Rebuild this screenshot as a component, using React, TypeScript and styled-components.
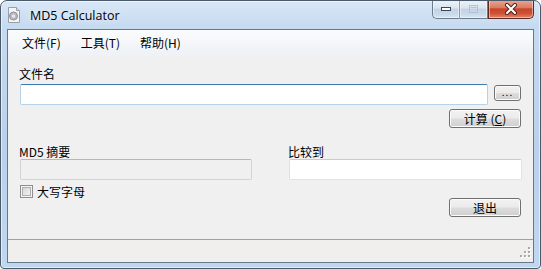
import React from "react";
import styled, { createGlobalStyle } from "styled-components";

const Global = createGlobalStyle`
  html, body { margin: 0; padding: 0; background: #ffffff; }
  body { width: 541px; height: 269px; overflow: hidden; font-family: "Noto Sans CJK SC", "Noto Sans", sans-serif; font-weight: 400; }
  * { box-sizing: border-box; }
`;

const Window = styled.div`
  width: 541px;
  height: 269px;
  border: 1px solid #4b5a6b;
  border-radius: 7px 7px 4px 4px;
  background: linear-gradient(180deg, #d9e7f6 0px, #c6daf0 26px, #b9d1eb 55%, #c0d7ef 100%);
  box-shadow: inset 0 0 0 1px rgba(255, 255, 255, 0.55);
  display: flex;
  flex-direction: column;
  overflow: hidden;
`;

const TitleBar = styled.div`
  height: 28px;
  flex: none;
  display: flex;
  align-items: flex-start;
  padding: 0 6px 0 5px;
`;

const AppIcon = styled.svg`
  width: 16px;
  height: 16px;
  margin-top: 6px;
  flex: none;
`;

const TitleText = styled.span`
  margin: 6px 0 0 8px;
  font-family: "Open Sans", "Noto Sans", sans-serif;
  font-size: 12.5px;
  line-height: 17px;
  color: #000;
  text-shadow: 0 0 6px rgba(255, 255, 255, 0.9);
`;

const Captions = styled.div`
  margin-left: auto;
  display: flex;
  height: 19px;
  margin-top: -1px;
`;

const CaptionBtn = styled.div<{ $kind: "min" | "max" | "close" }>`
  height: 19px;
  width: ${(p) => (p.$kind === "close" ? 46 : 28)}px;
  display: flex;
  align-items: center;
  justify-content: center;
  border: 1px solid ${(p) => (p.$kind === "close" ? "#5b2a22" : "#6c7c8e")};
  border-top: none;
  border-left: ${(p) => (p.$kind === "max" ? "none" : undefined)};
  border-right: ${(p) => (p.$kind === "min" ? "1px solid #8a9aab" : undefined)};
  border-radius: ${(p) =>
    p.$kind === "min" ? "0 0 0 5px" : p.$kind === "close" ? "0 0 5px 0" : "0"};
  background: ${(p) =>
    p.$kind === "close"
      ? "linear-gradient(180deg, #e9a996 0%, #db7b62 42%, #c7432a 50%, #cf5236 75%, #e08669 100%)"
      : "linear-gradient(180deg, #edf3f9 0%, #dae5f1 45%, #c3d2e3 50%, #cbdaea 80%, #d8e5f2 100%)"};
  box-shadow: inset 0 0 0 1px rgba(255, 255, 255, 0.45);
`;

const Client = styled.div`
  flex: 1;
  min-height: 0;
  margin: 0 6px 5px;
  border: 1px solid #66788c;
  display: flex;
  flex-direction: column;
  background: #f0f0f0;
`;

const MenuBar = styled.div`
  height: 26px;
  flex: none;
  display: flex;
  align-items: center;
  padding-left: 4px;
  background: linear-gradient(180deg, #fbfcfd 0%, #f3f5f8 60%, #eef1f5 100%);
`;

const MenuItem = styled.span`
  padding: 0 10px;
  font-size: 12px;
  line-height: 16px;
  color: #000;
`;

const Content = styled.div`
  flex: 1;
  display: flex;
  flex-direction: column;
  padding: 11px 12px 0 12px;
`;

const FieldLabel = styled.div`
  height: 14px;
  font-size: 12px;
  font-weight: 400;
  line-height: 14px;
  margin-left: -1px;
  color: #000;
  white-space: nowrap;
`;

const TextBox = styled.input<{ $state: "focus" | "normal" | "disabled" }>`
  display: block;
  width: 100%;
  height: 21px;
  margin: 0;
  padding: 0 3px;
  font-family: "Noto Sans CJK SC", sans-serif;
  font-size: 12px;
  outline: none;
  border-radius: 2px;
  border: 1px solid
    ${(p) => (p.$state === "focus" ? "#b5d2ea" : p.$state === "disabled" ? "#d3d3d3" : "#dde3e9")};
  border-top-color: ${(p) =>
    p.$state === "focus" ? "#3d7bad" : p.$state === "disabled" ? "#b8b8b8" : "#c6cbd1"};
  background: ${(p) => (p.$state === "disabled" ? "#f0f0f0" : "#ffffff")};
`;

const FileRow = styled.div`
  display: flex;
  align-items: flex-start;
  gap: 6px;
  margin-top: 3px;
`;

const Grow = styled.div`
  flex: 1;
`;

const PushButton = styled.button<{ $w: number; $h: number }>`
  width: ${(p) => p.$w}px;
  height: ${(p) => p.$h}px;
  margin: 0;
  padding: 0;
  flex: none;
  border: 1px solid #707070;
  border-radius: 3px;
  background: linear-gradient(180deg, #f2f2f2 0%, #ebebeb 48%, #dddddd 52%, #cfcfcf 100%);
  box-shadow: inset 0 0 0 1px #fbfbfb;
  font-family: "Noto Sans CJK SC", sans-serif;
  font-size: 12px;
  font-weight: 400;
  line-height: 14px;
  color: #000;
  display: flex;
  align-items: center;
  justify-content: center;
`;

const BrowseButton = styled(PushButton)`
  margin-top: 1px;
  align-items: flex-end;
  padding-bottom: 3px;
  letter-spacing: 1px;
  font-size: 10px;
  line-height: 10px;
`;

const ActionRow = styled.div<{ $top: number }>`
  display: flex;
  justify-content: flex-end;
  margin-top: ${(p) => p.$top}px;
`;

const LowerGrid = styled.div`
  display: grid;
  grid-template-columns: 232px 1fr;
  column-gap: 37px;
  margin-top: 17px;
  margin-right: -1px;
`;

const CheckRow = styled.label`
  display: flex;
  align-items: center;
  margin-top: 5px;
  height: 13px;
`;

const CheckBox = styled.span`
  width: 13px;
  height: 13px;
  flex: none;
  border: 1px solid #8f8f8f;
  box-shadow: inset 0 0 0 1px #f4f4f4, inset 0 0 0 2px #b0b0b0;
  background-image: linear-gradient(135deg, #cfcfcf 0%, #e9e9e9 60%, #f8f8f8 100%);
`;

const CheckText = styled.span`
  margin-left: 4px;
  font-size: 12px;
  line-height: 13px;
  color: #000;
`;

const StatusBar = styled.div`
  height: 23px;
  flex: none;
  border-top: 1px solid #a0a0a0;
  background: #f0efee;
  display: flex;
  justify-content: flex-end;
  align-items: flex-end;
  padding: 0 1px 3px 0;
`;

const Grip = styled.svg`
  width: 12px;
  height: 12px;
`;

const gripDots: [number, number][] = [
  [8, 0],
  [4, 4],
  [8, 4],
  [0, 8],
  [4, 8],
  [8, 8],
];

export default function App() {
  return (
    <>
      <Global />
      <Window>
        <TitleBar>
          <AppIcon viewBox="0 0 16 16">
            <path d="M2.5 0.5h8l3 3v12h-11z" fill="#f4f5f7" stroke="#9a9ea6" />
            <path d="M10.5 0.5v3h3" fill="#dfe2e6" stroke="#9a9ea6" />
            <circle cx="7.5" cy="9" r="4" fill="#b9bcc4" stroke="#8d919a" />
            <circle cx="7.5" cy="9" r="1.6" fill="#eceef1" />
          </AppIcon>
          <TitleText>MD5 Calculator</TitleText>
          <Captions>
            <CaptionBtn $kind="min">
              <svg width="12" height="6" viewBox="0 0 12 6">
                <rect x="1.5" y="1.5" width="9" height="3" fill="#ffffff" stroke="#38475a" />
              </svg>
            </CaptionBtn>
            <CaptionBtn $kind="max">
              <svg width="11" height="10" viewBox="0 0 11 10">
                <rect x="1.5" y="1.5" width="8" height="7" fill="none" stroke="#b3c2d2" />
                <rect x="2.5" y="3" width="6" height="1" fill="#b3c2d2" />
              </svg>
            </CaptionBtn>
            <CaptionBtn $kind="close">
              <svg width="14" height="12" viewBox="0 0 14 12">
                <path d="M3 2l8 8M11 2l-8 8" stroke="#4a1d16" strokeWidth="4" strokeLinecap="round" />
                <path d="M3 2l8 8M11 2l-8 8" stroke="#ffffff" strokeWidth="2.2" strokeLinecap="round" />
              </svg>
            </CaptionBtn>
          </Captions>
        </TitleBar>
        <Client>
          <MenuBar>
            <MenuItem>文件(F)</MenuItem>
            <MenuItem>工具(T)</MenuItem>
            <MenuItem>帮助(H)</MenuItem>
          </MenuBar>
          <Content>
            <FieldLabel>文件名</FieldLabel>
            <FileRow>
              <Grow>
                <TextBox $state="focus" readOnly value="" />
              </Grow>
              <BrowseButton $w={27} $h={16}>...</BrowseButton>
            </FileRow>
            <ActionRow $top={4}>
              <PushButton $w={72} $h={19}>
                计算 (<u>C</u>)
              </PushButton>
            </ActionRow>
            <LowerGrid>
              <FieldLabel>MD5 摘要</FieldLabel>
              <FieldLabel>比较到</FieldLabel>
              <TextBox $state="disabled" readOnly value="" />
              <TextBox $state="normal" readOnly value="" />
            </LowerGrid>
            <CheckRow>
              <CheckBox />
              <CheckText>大写字母</CheckText>
            </CheckRow>
            <ActionRow $top={0}>
              <PushButton $w={72} $h={19}>
                退出
              </PushButton>
            </ActionRow>
          </Content>
          <StatusBar>
            <Grip viewBox="0 0 12 12">
              {gripDots.map(([x, y]) => (
                <g key={`${x}-${y}`}>
                  <rect x={x + 1} y={y + 1} width="2" height="2" fill="#ffffff" />
                  <rect x={x} y={y} width="2" height="2" fill="#a8a8a8" />
                </g>
              ))}
            </Grip>
          </StatusBar>
        </Client>
      </Window>
    </>
  );
}
